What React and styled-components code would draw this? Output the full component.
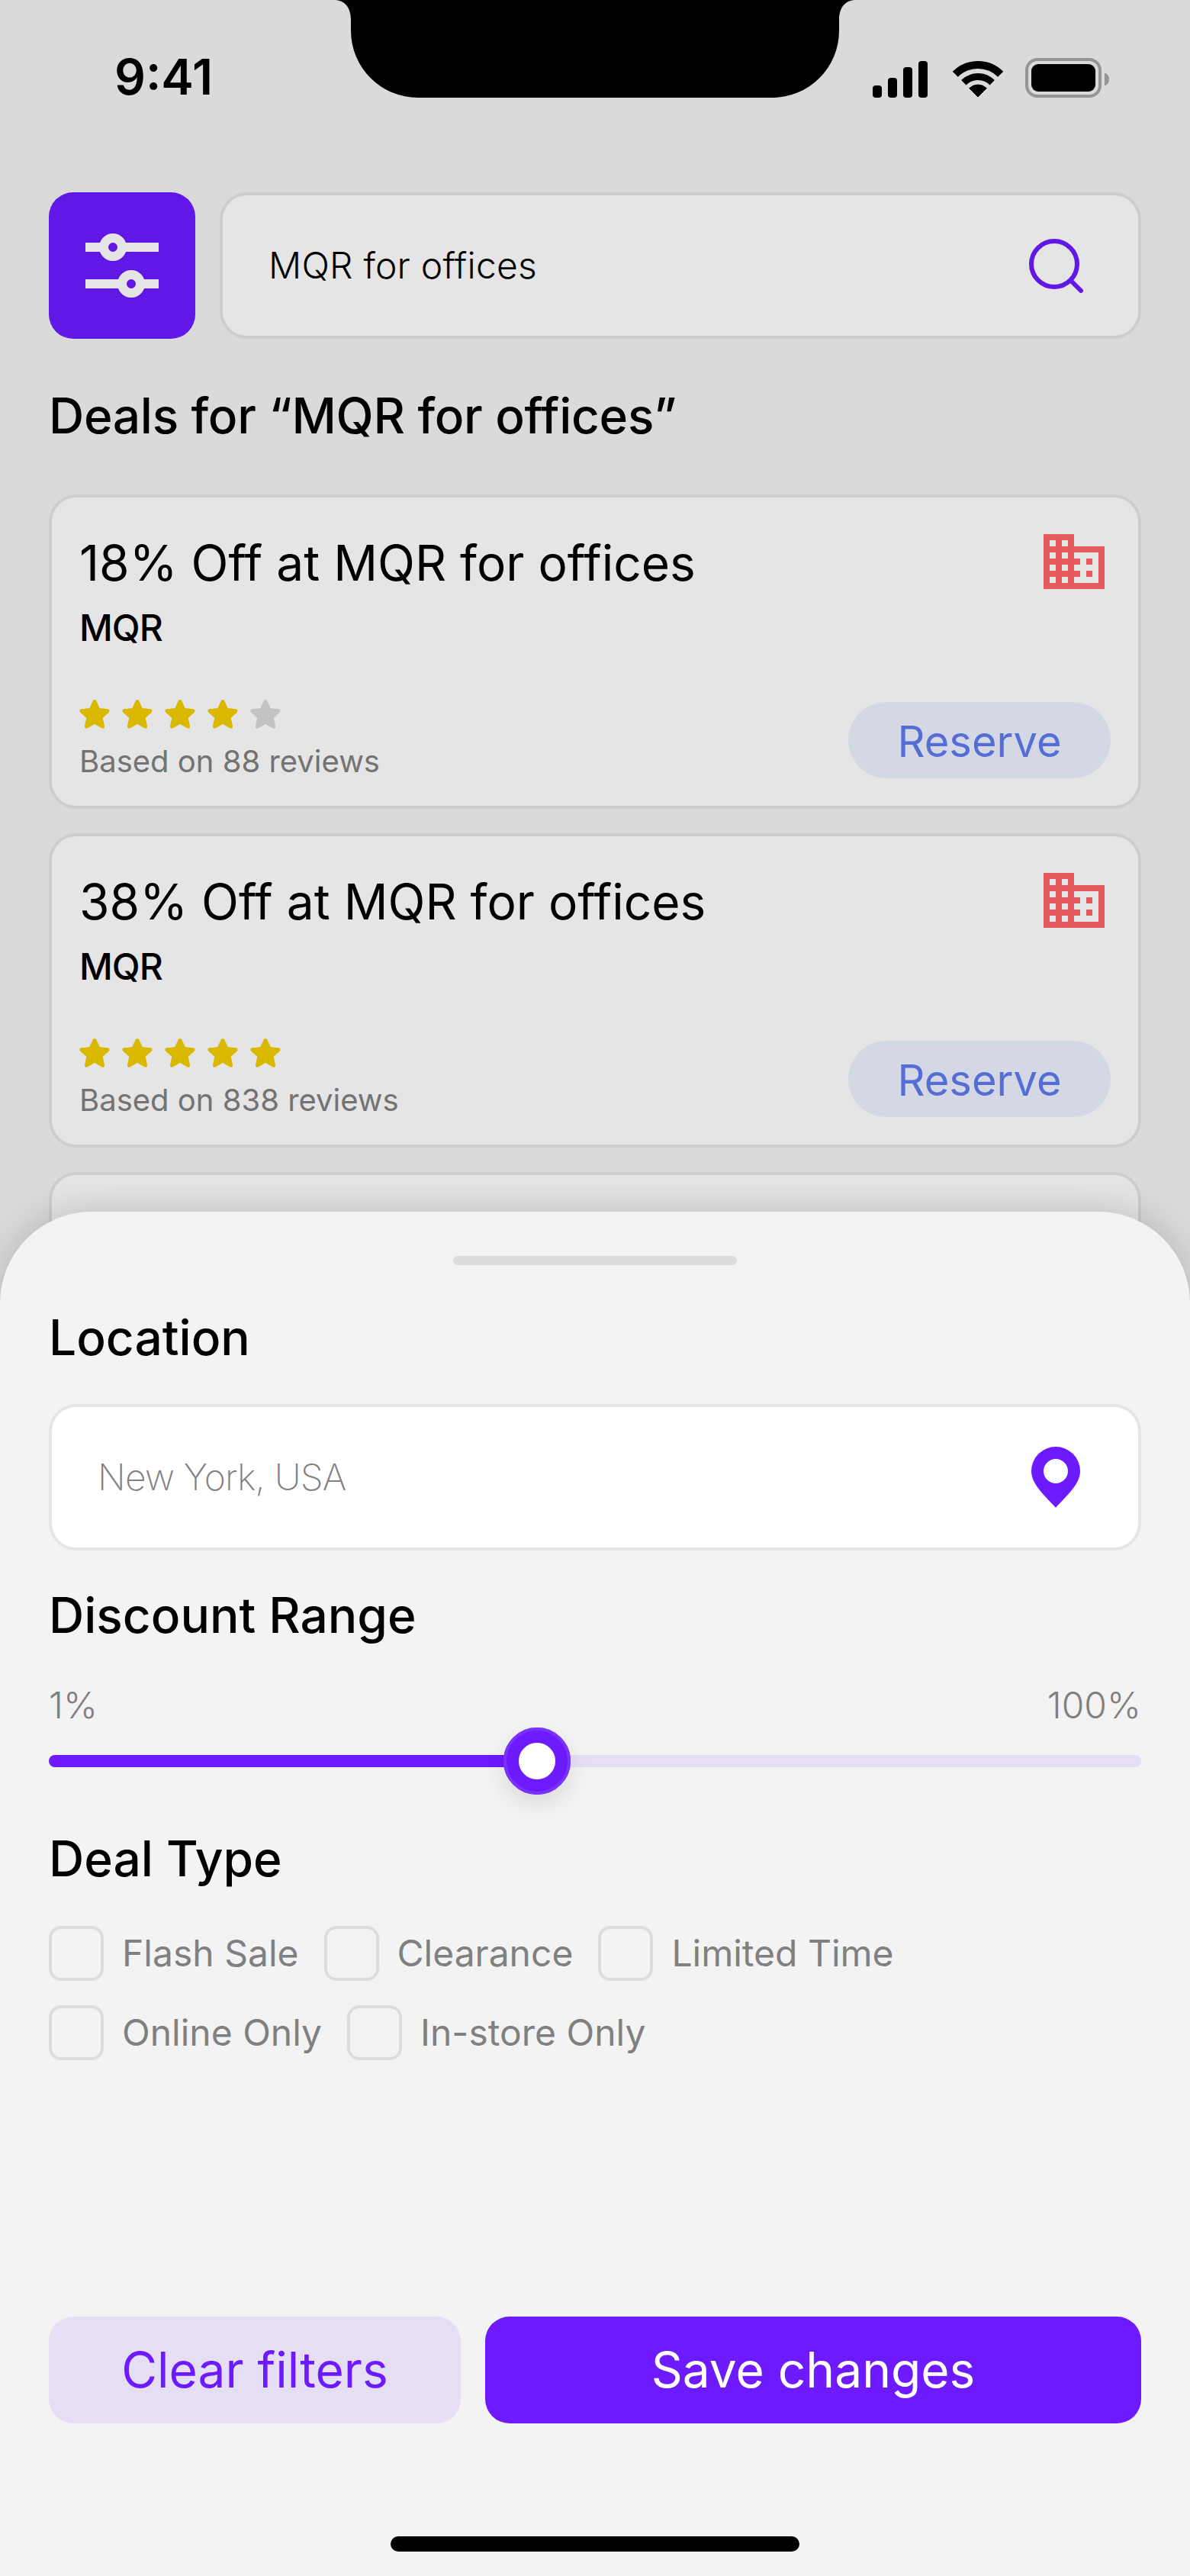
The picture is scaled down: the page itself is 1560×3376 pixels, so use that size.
import React from "react";
import styled, { createGlobalStyle } from "styled-components";

const Global = createGlobalStyle`
  html, body { margin: 0; padding: 0; background: #f3f3f3; }
  * { box-sizing: border-box; }
  body { font-family: Inter, "Liberation Sans", sans-serif; color: #000; }
`;

const Screen = styled.div`
  position: relative;
  width: 1560px;
  height: 3376px;
  overflow: hidden;
  background: #f3f3f3;
`;
const Scrim = styled.div`
  position: absolute;
  inset: 0;
  background: rgba(0, 0, 0, 0.1);
`;
const Content = styled.div`
  display: flex;
  flex-direction: column;
  padding: 0 64px;
`;
const StatusBar = styled.div`
  height: 252px;
  display: flex;
  justify-content: space-between;
  align-items: flex-start;
  margin: 0 -64px;
  padding: 0 106px 0 150px;
`;
const Time = styled.div`
  font-size: 64px;
  font-weight: 600;
  line-height: 72px;
  margin-top: 65px;
`;
const StatusIcons = styled.div`
  display: flex;
  align-items: flex-end;
  gap: 28px;
  margin-top: 76px;
  height: 52px;
  & > svg:first-child {
    margin-right: 4px;
  }
`;
const Notch = styled.svg`
  position: absolute;
  top: 0;
  left: 438px;
`;
const SearchRow = styled.div`
  display: flex;
  gap: 32px;
`;
const FilterButton = styled.div`
  width: 192px;
  height: 192px;
  flex: none;
  border-radius: 32px;
  background: #6d1aff;
  display: flex;
  align-items: center;
  justify-content: center;
`;
const SearchBox = styled.div`
  flex: 1;
  height: 192px;
  border: 4px solid #e5e5e5;
  border-radius: 36px;
  background: #ffffff;
  display: flex;
  align-items: center;
  justify-content: space-between;
  padding: 0 71px 0 60px;
`;
const SearchText = styled.div`
  font-size: 48px;
  font-weight: 300;
  line-height: 58px;
  letter-spacing: 0.2px;
`;
const Title = styled.h1`
  margin: 62px 0 64px;
  font-size: 64px;
  font-weight: 500;
  line-height: 78px;
  letter-spacing: -0.3px;
`;
const Cards = styled.div`
  display: flex;
  flex-direction: column;
  gap: 32px;
`;
const Card = styled.div`
  height: 412px;
  border: 4px solid #e5e5e5;
  border-radius: 36px;
  background: #ffffff;
  padding: 48px 36px 34px;
  display: flex;
  flex-direction: column;
`;
const CardTop = styled.div`
  display: flex;
  justify-content: space-between;
  align-items: flex-start;
  padding-right: 8px;
`;
const CardTitle = styled.div`
  font-size: 64px;
  font-weight: 400;
  line-height: 72px;
  margin-top: 2px;
`;
const Brand = styled.div`
  font-size: 48px;
  font-weight: 500;
  line-height: 58px;
  margin-top: 20px;
  letter-spacing: -1px;
`;
const CardBottom = styled.div`
  margin-top: auto;
  display: flex;
  justify-content: space-between;
  align-items: flex-end;
`;
const Stars = styled.div`
  display: flex;
  gap: 16px;
`;
const Reviews = styled.div`
  margin-top: 18px;
  font-size: 40px;
  line-height: 48px;
  color: #808080;
`;
const Reserve = styled.div`
  width: 344px;
  height: 100px;
  margin-bottom: 2px;
  border-radius: 50px;
  background: #edf1ff;
  color: #5f7bee;
  font-size: 56px;
  line-height: 104px;
  text-align: center;
`;
const Sheet = styled.div`
  position: absolute;
  left: 0;
  right: 0;
  top: 1588px;
  bottom: 0;
  border-radius: 120px 120px 0 0;
  background: #f3f3f3;
  box-shadow: 0 -4px 48px rgba(0, 0, 0, 0.16);
  padding: 0 64px;
  display: flex;
  flex-direction: column;
`;
const Handle = styled.div`
  align-self: center;
  width: 372px;
  height: 12px;
  margin-top: 58px;
  border-radius: 6px;
  background: #dcdcdc;
`;
const SectionLabel = styled.div`
  font-size: 64px;
  font-weight: 500;
  line-height: 78px;
  margin-top: ${(p) => p.$top}px;
`;
const LocationInput = styled.div`
  height: 192px;
  margin-top: 48px;
  border: 4px solid #e5e5e5;
  border-radius: 36px;
  background: #fff;
  display: flex;
  align-items: center;
  justify-content: space-between;
  padding: 0 76px 0 60px;
`;
const Placeholder = styled.div`
  font-size: 48px;
  font-weight: 200;
  line-height: 58px;
  letter-spacing: -0.8px;
  color: #808080;
`;
const RangeLabels = styled.div`
  display: flex;
  justify-content: space-between;
  margin-top: 51px;
  font-size: 48px;
  font-weight: 300;
  line-height: 55px;
  color: #808080;
`;
const Track = styled.div`
  position: relative;
  height: 16px;
  margin-top: 38px;
  border-radius: 8px;
  background: #e6def5;
`;
const TrackFill = styled.div`
  height: 100%;
  border-radius: 8px 0 0 8px;
  background: #6d1aff;
`;
const Thumb = styled.div`
  position: absolute;
  top: 50%;
  width: 88px;
  height: 88px;
  transform: translate(-50%, -50%);
  border-radius: 50%;
  background: #fff;
  border: 20px solid #6d1aff;
  outline: 4px solid #7a33ff;
  outline-offset: -4px;
  box-shadow: 0 12px 32px rgba(0, 0, 0, 0.1);
`;
const Options = styled.div`
  display: flex;
  flex-wrap: wrap;
  gap: 32px 33px;
  margin-top: 49px;
`;
const Option = styled.div`
  display: flex;
  align-items: center;
  gap: 24px;
`;
const Box = styled.div`
  width: 72px;
  height: 72px;
  border: 4px solid #dcdcdc;
  border-radius: 16px;
`;
const OptionText = styled.div`
  font-size: 48px;
  line-height: 58px;
  color: #808080;
`;
const Actions = styled.div`
  margin-top: auto;
  display: flex;
  gap: 32px;
`;
const ActionButton = styled.div`
  height: 140px;
  border-radius: 32px;
  font-size: 64px;
  line-height: 140px;
  text-align: center;
  ${(p) =>
    p.$primary
      ? "flex: 1; background: #6d1aff; color: #fff;"
      : "width: 540px; background: #e6def5; color: #6d1aff;"}
`;
const HomeIndicator = styled.div`
  align-self: center;
  width: 536px;
  height: 20px;
  margin: 148px 0 32px;
  border-radius: 10px;
  background: #000;
`;

const SliderIcon = () => (
  <svg width="96" height="84" viewBox="0 0 96 84">
    <rect y="12" width="96" height="12" fill="#fff" />
    <rect y="60" width="96" height="12" fill="#fff" />
    <circle cx="36" cy="18" r="12" fill="#6d1aff" stroke="#fff" strokeWidth="12" />
    <circle cx="60" cy="66" r="12" fill="#6d1aff" stroke="#fff" strokeWidth="12" />
  </svg>
);
const SearchIcon = () => (
  <svg width="72" height="72" viewBox="0 0 72 72" fill="none" stroke="#6d1aff" strokeWidth="6">
    <circle cx="33" cy="34" r="30" />
    <path d="M56 57 L68 69" strokeLinecap="round" />
  </svg>
);
const Building = () => (
  <svg width="80" height="72" viewBox="0 0 80 72">
    <path
      fill="#ff6666"
      fillRule="evenodd"
      d="M0 0H40V16H80V72H0Z M8 8V16H16V8Z M24 8V16H32V8Z M8 24V32H16V24Z M24 24V32H32V24Z M8 40V48H16V40Z M24 40V48H32V40Z M8 56V64H16V56Z M24 56V64H32V56Z M40 24V32H48V40H40V48H48V56H40V64H72V24Z"
    />
    <path fill="#ff6666" d="M56 32H64V40H56Z M56 48H64V56H56Z" />
  </svg>
);
const Star = ({ on }) => (
  <svg width="40" height="40" viewBox="0 0 40 40">
    <path
      d="M20 3.5 L25 14.5 L37 15.8 L28 24 L30.6 36.2 L20 30 L9.4 36.2 L12 24 L3 15.8 L15 14.5 Z"
      fill={on ? "#f4cd00" : "#d8d8d8"}
      stroke={on ? "#f4cd00" : "#d8d8d8"}
      strokeWidth="5"
      strokeLinejoin="round"
    />
  </svg>
);
const Pin = () => (
  <svg width="64" height="80" viewBox="0 0 64 80">
    <path
      fill="#6d1aff"
      fillRule="evenodd"
      d="M32 0A32 32 0 0 1 64 32C64 50 44 66 32 80C20 66 0 50 0 32A32 32 0 0 1 32 0Z M32 16A16 16 0 1 0 32 48A16 16 0 1 0 32 16Z"
    />
  </svg>
);
const Signal = () => (
  <svg width="72" height="48" viewBox="0 0 72 48">
    <rect x="0" y="32" width="12" height="16" rx="4" />
    <rect x="20" y="22" width="12" height="26" rx="4" />
    <rect x="40" y="8" width="12" height="40" rx="4" />
    <rect x="60" y="0" width="12" height="48" rx="4" />
  </svg>
);
const Wifi = () => (
  <svg width="68" height="48" viewBox="0 0 68 48">
    <path d="M4.3 17.3 A42 42 0 0 1 63.7 17.3" fill="none" stroke="#000" strokeWidth="10" />
    <path d="M15.3 28.3 A26.5 26.5 0 0 1 52.7 28.3" fill="none" stroke="#000" strokeWidth="9" />
    <path d="M34 47 L22.7 35.7 A16 16 0 0 1 45.3 35.7 Z" fill="#000" stroke="#000" strokeWidth="1" strokeLinejoin="round" />
  </svg>
);
const Battery = () => (
  <svg width="110" height="52" viewBox="0 0 110 52">
    <rect x="2" y="2" width="96" height="48" rx="14" fill="none" stroke="#a6a6a6" strokeWidth="4" />
    <rect x="8" y="8" width="84" height="36" rx="9" fill="#000" />
    <path d="M104 20 A6 8 0 0 1 104 36 Z" fill="#a6a6a6" />
  </svg>
);

const deals = [
  { title: "18% Off at MQR for offices", rating: 4, reviews: 88 },
  { title: "38% Off at MQR for offices", rating: 5, reviews: 838 },
];
const options = ["Flash Sale", "Clearance", "Limited Time", "Online Only", "In-store Only"];

export default function App() {
  return (
    <Screen>
      <Global />
      <Content>
        <StatusBar>
          <Time>9:41</Time>
          <StatusIcons>
            <Signal />
            <Wifi />
            <Battery />
          </StatusIcons>
        </StatusBar>
        <SearchRow>
          <FilterButton>
            <SliderIcon />
          </FilterButton>
          <SearchBox>
            <SearchText>MQR for offices</SearchText>
            <SearchIcon />
          </SearchBox>
        </SearchRow>
        <Title>Deals for “MQR for offices”</Title>
        <Cards>
          {deals.map((d) => (
            <Card key={d.title}>
              <CardTop>
                <CardTitle>{d.title}</CardTitle>
                <Building />
              </CardTop>
              <Brand>MQR</Brand>
              <CardBottom>
                <div>
                  <Stars>
                    {[1, 2, 3, 4, 5].map((n) => (
                      <Star key={n} on={n <= d.rating} />
                    ))}
                  </Stars>
                  <Reviews>Based on {d.reviews} reviews</Reviews>
                </div>
                <Reserve>Reserve</Reserve>
              </CardBottom>
            </Card>
          ))}
          <Card />
        </Cards>
      </Content>
      <Notch width="684" height="128" viewBox="0 0 684 128">
        <path d="M0 0 C14 0 22 10 22 26 V40 A88 88 0 0 0 110 128 H574 A88 88 0 0 0 662 40 V26 C662 10 670 0 684 0 Z" fill="#000" />
      </Notch>
      <Scrim />
      <Sheet>
        <Handle />
        <SectionLabel $top={56}>Location</SectionLabel>
        <LocationInput>
          <Placeholder>New York, USA</Placeholder>
          <Pin />
        </LocationInput>
        <SectionLabel $top={46}>Discount Range</SectionLabel>
        <RangeLabels>
          <span>1%</span>
          <span>100%</span>
        </RangeLabels>
        <Track>
          <TrackFill style={{ width: `${(640 / 1432) * 100}%` }} />
          <Thumb style={{ left: `${(640 / 1432) * 100}%` }} />
        </Track>
        <SectionLabel $top={81}>Deal Type</SectionLabel>
        <Options>
          {options.map((o) => (
            <Option key={o}>
              <Box />
              <OptionText>{o}</OptionText>
            </Option>
          ))}
        </Options>
        <Actions>
          <ActionButton>Clear filters</ActionButton>
          <ActionButton $primary>Save changes</ActionButton>
        </Actions>
        <HomeIndicator />
      </Sheet>
    </Screen>
  );
}
